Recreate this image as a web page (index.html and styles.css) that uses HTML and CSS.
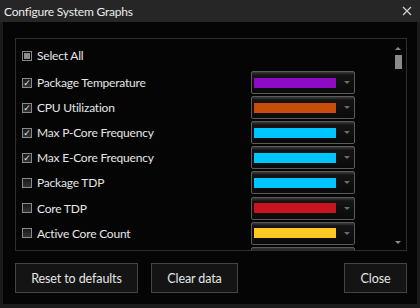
FILE: index.html
```html
<!DOCTYPE html>
<html>
<head>
<link rel="stylesheet" href="styles.css">
</head>
<body>
    <div class="window">
        <div class="titlebar">
            <span class="title">Configure System Graphs</span>
            <svg class="close" width="10" height="10" viewBox="0 0 10 10">
                <path d="M1 1 L9 9 M9 1 L1 9" stroke="#d0d0d0" stroke-width="1.2" fill="none"/>
            </svg>
        </div>
        <div class="content">
            <div class="panel">
                <div class="list">
                    <div class="row all">
                        <span class="box mixed"></span><span class="label">Select All</span>
                    </div>
                    <div class="row">
                        <span class="box checked">&#x2713;</span><span class="label">Package Temperature</span>
                        <div class="combo"><span class="swatch purple"></span><span class="arrow"></span></div>
                    </div>
                    <div class="row">
                        <span class="box checked">&#x2713;</span><span class="label">CPU Utilization</span>
                        <div class="combo"><span class="swatch orange"></span><span class="arrow"></span></div>
                    </div>
                    <div class="row">
                        <span class="box checked">&#x2713;</span><span class="label">Max P-Core Frequency</span>
                        <div class="combo"><span class="swatch cyan"></span><span class="arrow"></span></div>
                    </div>
                    <div class="row">
                        <span class="box checked">&#x2713;</span><span class="label">Max E-Core Frequency</span>
                        <div class="combo"><span class="swatch cyan"></span><span class="arrow"></span></div>
                    </div>
                    <div class="row">
                        <span class="box"></span><span class="label">Package TDP</span>
                        <div class="combo"><span class="swatch cyan"></span><span class="arrow"></span></div>
                    </div>
                    <div class="row">
                        <span class="box"></span><span class="label">Core TDP</span>
                        <div class="combo"><span class="swatch red"></span><span class="arrow"></span></div>
                    </div>
                    <div class="row">
                        <span class="box"></span><span class="label">Active Core Count</span>
                        <div class="combo"><span class="swatch yellow"></span><span class="arrow"></span></div>
                    </div>
                    <!-- next row, scrolled out of view -->
                    <div class="row">
                        <span class="box blank"></span><span class="label"></span>
                        <div class="combo"><span class="swatch cyan"></span><span class="arrow"></span></div>
                    </div>
                </div>
                <div class="scrollbar">
                    <span class="up"></span>
                    <span class="thumb"></span>
                    <span class="track"></span>
                    <span class="down"></span>
                </div>
            </div>
            <div class="footer">
                <button class="reset">Reset to defaults</button>
                <button class="clear">Clear data</button>
                <button class="right">Close</button>
            </div>
        </div>
    </div>
</body>
</html>
```

FILE: styles.css
```css
body{
    margin: 0;
    background: #000;
    font-family: Lato, "Open Sans", sans-serif;
    font-size: 12px;
    letter-spacing: -0.2px;
    color: #e6e6e6;
}

.window{
    width: 420px;
    height: 308px;
    box-sizing: border-box;
    background: #050505;
    border-left: 3px solid #1c1c1c;
    border-right: 3px solid #1c1c1c;
    border-bottom: 4px solid #1c1c1c;
    display: flex;
    flex-direction: column;
}

.titlebar{
    height: 22px;
    background: #262626;
    margin: 0 -3px;
    display: flex;
    align-items: center;
    justify-content: space-between;
    padding: 0 8px 0 4px;
}

.title{
    font-size: 12px;
    color: #ececec;
}

.content{
    flex: 1;
    display: flex;
    flex-direction: column;
    padding: 16px 10px 8px 12px;
}

.panel{
    height: 211px;
    border: 1px solid #2e2e2e;
    display: flex;
    overflow: hidden;
}

.list{
    flex: 1;
    padding: 3px 0 0 6px;
}

.row{
    height: 25.1px;
    display: flex;
    align-items: center;
}

.row.all{
    height: 27px;
    margin-bottom: 1px;
}

.box{
    width: 8px;
    height: 8px;
    border: 1px solid #8a8a8a;
    background: linear-gradient(#1a1a1a, #333);
    margin-right: 5px;
    font-size: 9px;
    line-height: 8px;
    text-align: center;
    color: #e0e0e0;
    font-family: "DejaVu Sans", sans-serif;
}

.box.blank{
    visibility: hidden;
}

.box.mixed{
    background: #000;
    position: relative;
}

.box.mixed::after{
    content: "";
    position: absolute;
    left: 1px;
    top: 1px;
    width: 6px;
    height: 6px;
    background: #8c8c8c;
}

.label{
    width: 214px;
}

.combo{
    width: 100px;
    height: 21px;
    border: 1px solid #5a5a5a;
    border-radius: 2px;
    background: linear-gradient(#3a3a3a 0, #141414 3px, #0a0a0a);
    display: flex;
    align-items: center;
    padding-left: 2px;
    box-sizing: content-box;
}

.swatch{
    width: 82px;
    height: 10px;
}

.purple{ background: #8e0bc6; }
.orange{ background: #c84d0b; }
.cyan{ background: #00c6ff; }
.red{ background: #c8141e; }
.yellow{ background: #ffc823; }

.arrow{
    margin-left: 8px;
    border-left: 3px solid transparent;
    border-right: 3px solid transparent;
    border-top: 3px solid #6c6c6c;
}

.scrollbar{
    width: 16px;
    display: flex;
    flex-direction: column;
    align-items: center;
    padding: 8px 0 6px;
}

.up{
    border-left: 3px solid transparent;
    border-right: 3px solid transparent;
    border-bottom: 3px solid #8a8a8a;
    margin-bottom: 5px;
}

.thumb{
    width: 7px;
    height: 14px;
    background: #8a8a8a;
}

.track{
    flex: 1;
}

.down{
    border-left: 3px solid transparent;
    border-right: 3px solid transparent;
    border-top: 3px solid #8a8a8a;
}

.footer{
    display: flex;
    margin-top: 12px;
    gap: 13px;
}

button{
    height: 30px;
    padding: 0;
    background: #141414;
    border: 1px solid #444;
    color: #e6e6e6;
    font-family: Lato, "Open Sans", sans-serif;
    font-size: 12.5px;
    letter-spacing: -0.1px;
}

.reset{ width: 123px; }
.clear{ width: 87px; }

.right{
    width: 63px;
    margin-left: auto;
}
```
